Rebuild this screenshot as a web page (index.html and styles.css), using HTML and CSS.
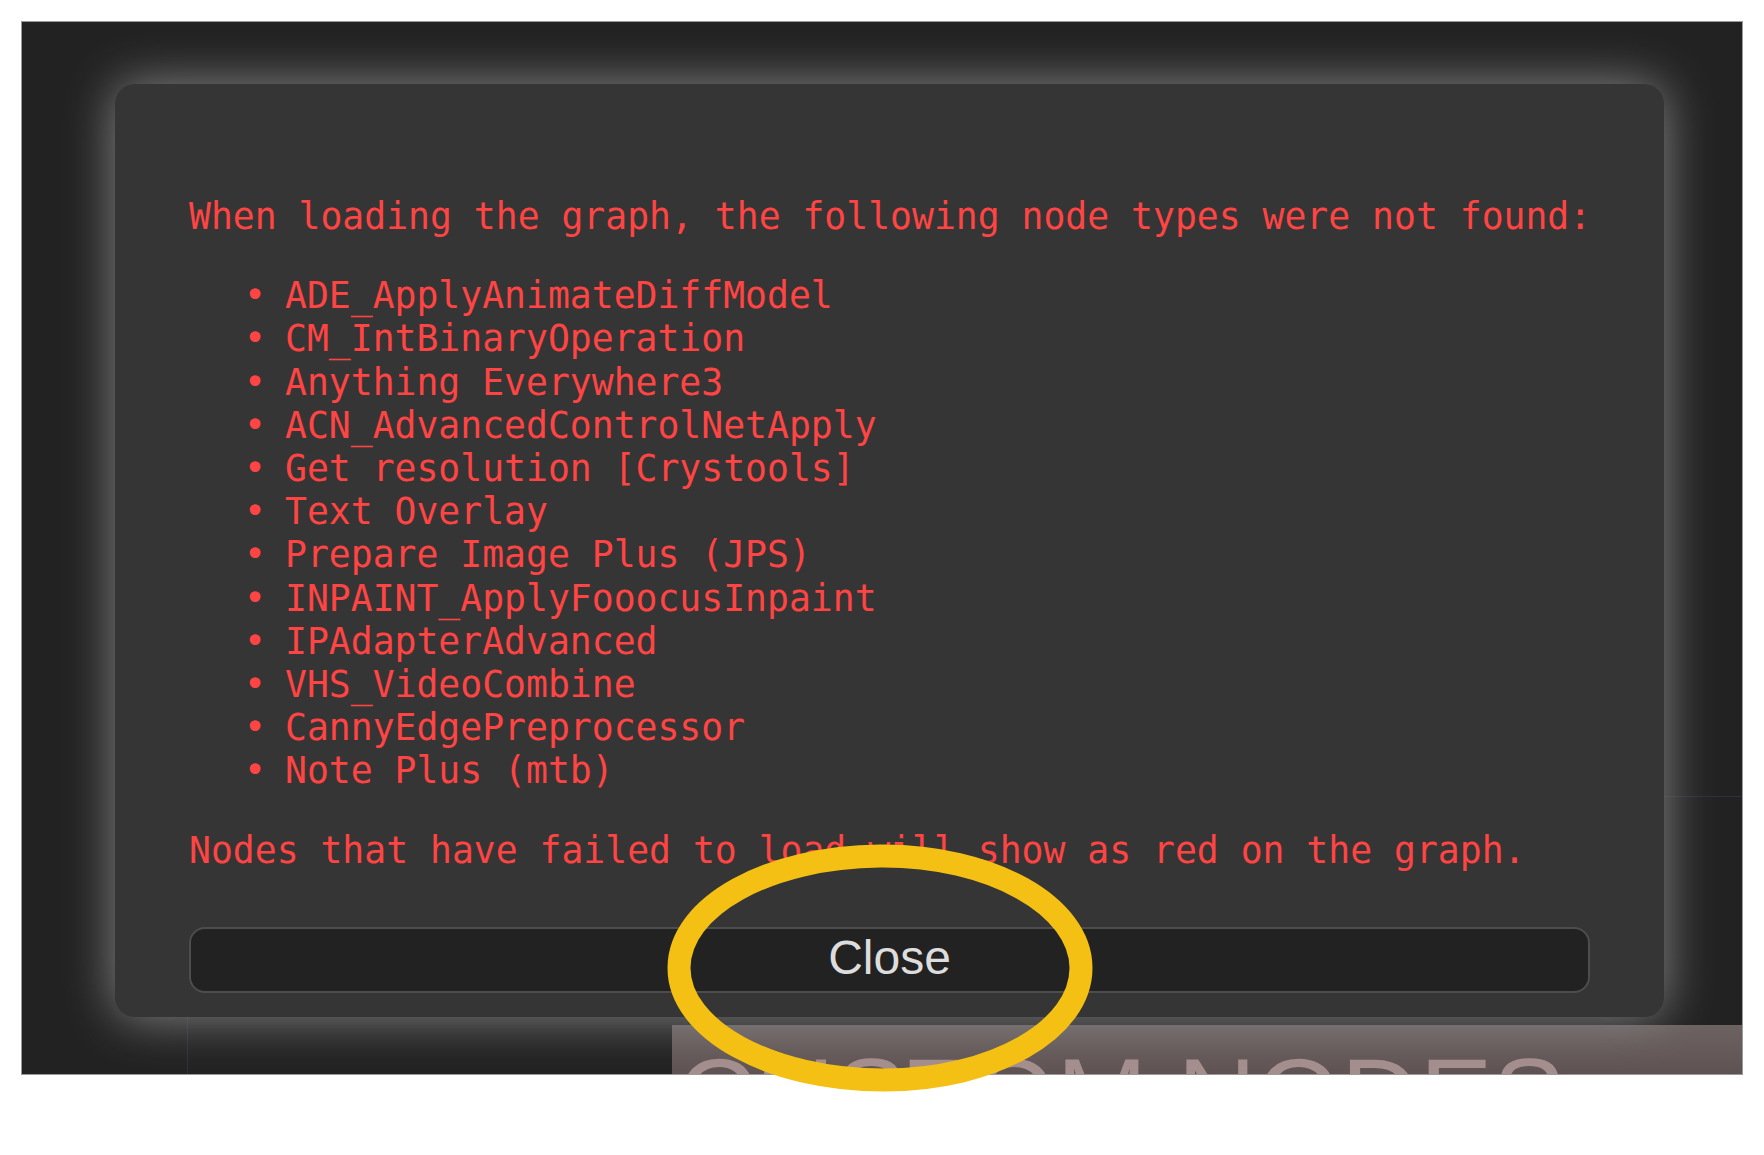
FILE: index.html
```html
<!DOCTYPE html>
<html lang="en">
<head>
<meta charset="utf-8">
<title>Missing nodes</title>
<link rel="stylesheet" href="styles.css">
</head>
<body>
<div class="page">
  <div class="frame">
    <div class="grid-line grid-line-v"></div>
    <div class="grid-line grid-line-h"></div>
    <div class="node-bar"><span class="node-bar-title">CUSTOM NODES</span></div>
    <div class="modal">
      <p class="msg">When loading the graph, the following node types were not found:</p>
      <ul class="node-list">
        <li>ADE_ApplyAnimateDiffModel</li>
        <li>CM_IntBinaryOperation</li>
        <li>Anything Everywhere3</li>
        <li>ACN_AdvancedControlNetApply</li>
        <li>Get resolution [Crystools]</li>
        <li>Text Overlay</li>
        <li>Prepare Image Plus (JPS)</li>
        <li>INPAINT_ApplyFooocusInpaint</li>
        <li>IPAdapterAdvanced</li>
        <li>VHS_VideoCombine</li>
        <li>CannyEdgePreprocessor</li>
        <li>Note Plus (mtb)</li>
      </ul>
      <p class="msg msg-last">Nodes that have failed to load will show as red on the graph.</p>
      <button class="close-btn" type="button">Close</button>
    </div>
  </div>
  <svg class="mark" width="460" height="280" viewBox="650 830 460 280" aria-hidden="true">
    <path d="M 880 856 C 991 855 1081 906 1081 968 C 1081 1030 993 1080 884 1080 C 771 1080 679 1030 679 968 C 679 906 769 857 880 856 Z" fill="none" stroke="#f3c013" stroke-width="23" stroke-linejoin="round"/>
  </svg>
</div>
</body>
</html>
```

FILE: styles.css
```css
html, body {
  margin: 0;
  padding: 0;
  background: #ffffff;
}

.page {
  position: relative;
  width: 1764px;
  height: 1155px;
  padding: 21px 0 0 21px;
  box-sizing: border-box;
}

.frame {
  position: relative;
  width: 1722px;
  height: 1054px;
  box-sizing: border-box;
  border: 1px solid #9a9a9a;
  background: #222222;
  overflow: hidden;
  padding: 62px 0 0 93px;
}

.grid-line {
  position: absolute;
  background: #2b303c;
}

.grid-line-v {
  left: 165px;
  top: 900px;
  width: 1px;
  bottom: 0;
}

.grid-line-h {
  left: 1560px;
  right: 0;
  top: 774px;
  height: 1px;
}

.node-bar {
  position: absolute;
  left: 650px;
  top: 1003px;
  right: 0;
  bottom: 0;
  background: linear-gradient(180deg, #6d6262 0%, #5f5252 100%);
  padding: 18px 0 0 5px;
  box-sizing: border-box;
}

.node-bar-title {
  display: block;
  font-family: "Liberation Sans", Arial, sans-serif;
  font-size: 109px;
  line-height: 109px;
  color: #a58e8e;
  white-space: nowrap;
}

.modal {
  position: relative;
  z-index: 1;
  width: 1549px;
  box-sizing: border-box;
  background: #353535;
  border-radius: 20px;
  box-shadow: 0 0 50px #888888;
  padding: 111px 74px 24px 74px;
}

.msg {
  margin: 0 0 36px 0;
  font-family: "DejaVu Sans Mono", "Liberation Mono", monospace;
  font-size: 36.4px;
  line-height: 43.2px;
  color: #ff4444;
  white-space: nowrap;
}

.msg-last {
  margin: 0;
}

.node-list {
  margin: 0 0 36px 0;
  padding: 0 0 0 96px;
  list-style: none;
  font-family: "DejaVu Sans Mono", "Liberation Mono", monospace;
  font-size: 36.4px;
  line-height: 43.2px;
  color: #ff4444;
  white-space: nowrap;
}

.node-list li::before {
  content: "\2022";
  display: inline-block;
  width: 41px;
  margin-left: -41px;
  text-align: left;
}

.close-btn {
  display: block;
  width: 100%;
  height: 66px;
  margin: 55px 0 0 0;
  box-sizing: border-box;
  border: 2px solid #4d4d4d;
  border-radius: 16px;
  background: #222222;
  color: #dddddd;
  font-family: "Liberation Sans", Arial, sans-serif;
  font-size: 48px;
  line-height: 56px;
  padding: 0 0 4px 0;
  cursor: pointer;
}

.mark {
  position: absolute;
  z-index: 2;
  left: 650px;
  top: 830px;
  overflow: visible;
}
```
